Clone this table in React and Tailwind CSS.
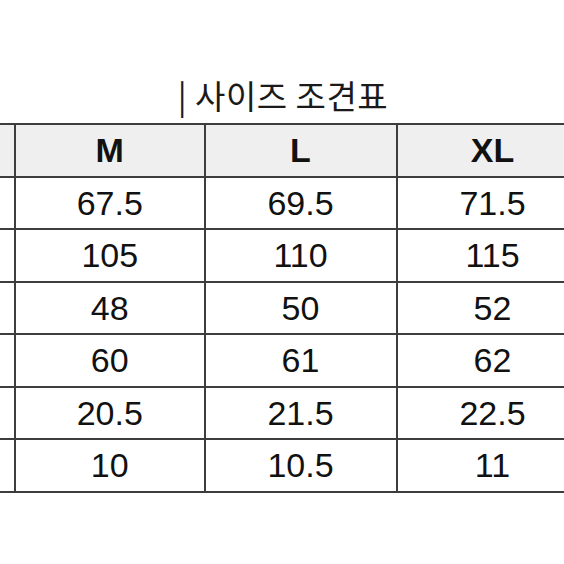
import React from "react";

const rows = [
  ["67.5", "69.5", "71.5"],
  ["105", "110", "115"],
  ["48", "50", "52"],
  ["60", "61", "62"],
  ["20.5", "21.5", "22.5"],
  ["10", "10.5", "11"],
];

function Row({ cells, header }) {
  return (
    <div
      className={`flex h-[52.5px] border-b-[2.5px] border-[#3d3d3d] ${
        header ? "bg-[#efefef]" : "bg-white"
      }`}
    >
      <div className="w-[176px] shrink-0 border-r-[2.5px] border-[#3d3d3d]" />
      {cells.map((c, i) => (
        <div
          key={i}
          className={`${i === 0 ? "w-[189.5px]" : "w-[192px]"} shrink-0 border-r-[2.5px] border-[#3d3d3d] flex items-center justify-center text-[34px] leading-none text-[#111] ${
            header ? "font-bold" : "font-normal"
          }`}
        >
          {c}
        </div>
      ))}
    </div>
  );
}

export default function App() {
  return (
    <div
      className="w-[564px] h-[564px] overflow-hidden bg-white"
      style={{ fontFamily: '"Liberation Sans", Arial, sans-serif' }}
    >
      <div className="pt-[79px] h-[123px] flex justify-center">
        <div
          className="text-[33px] leading-[33px] text-[#1a1a1a] ml-[2px] tracking-[0.5px]"
          style={{ fontFamily: '"Noto Sans CJK KR", "Noto Sans", sans-serif' }}
        >
          | 사이즈 조견표
        </div>
      </div>
      <div className="ml-[-160px] w-[800px]">
        <div className="border-t-[2.5px] border-[#3d3d3d]">
          <Row header cells={["M", "L", "XL"]} />
          {rows.map((r, i) => (
            <Row key={i} cells={r} />
          ))}
        </div>
      </div>
    </div>
  );
}
